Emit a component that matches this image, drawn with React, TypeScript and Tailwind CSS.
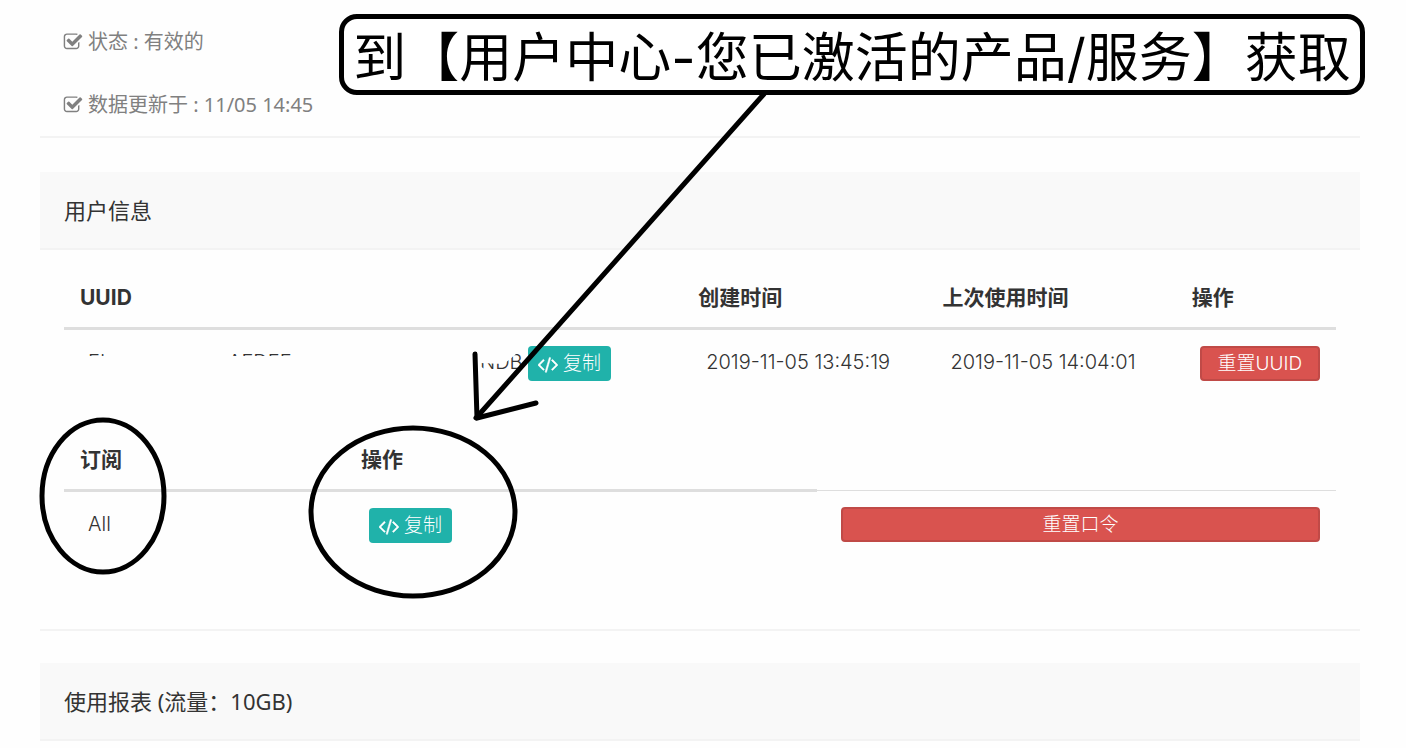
import type { ReactNode } from 'react';

function CheckIcon() {
  return (
    <svg viewBox="0 0 1792 1792" className="size-5 shrink-0 fill-current" aria-hidden="true">
      <path d="M1472 930v318q0 119-84.5 203.5t-203.5 84.5h-832q-119 0-203.5-84.5t-84.5-203.5v-832q0-119 84.5-203.5t203.5-84.5h832q63 0 117 25 15 7 18 23 3 17-9 29l-49 49q-10 10-23 10-3 0-9-2-23-6-45-6h-832q-66 0-113 47t-47 113v832q0 66 47 113t113 47h832q66 0 113-47t47-113v-254q0-13 9-22l64-64q10-10 23-10 6 0 12 3 20 8 20 29zm231-489l-814 814q-24 24-57 24t-57-24l-430-430q-24-24-24-57t24-57l110-110q24-24 57-24t57 24l263 263 647-647q24-24 57-24t57 24l110 110q24 24 24 57t-24 57z" />
    </svg>
  );
}

function CodeIcon() {
  return (
    <svg
      viewBox="-10 -40 1832 1832"
      className="size-5 shrink-0 fill-current stroke-current stroke-[50]"
      aria-hidden="true"
    >
      <path d="M553 1399l-50 50q-10 10-23 10t-23-10l-466-466q-10-10-10-23t10-23l466-466q10-10 23-10t23 10l50 50q10 10 10 23t-10 23l-393 393 393 393q10 10 10 23t-10 23zm591-1067l-373 1291q-4 13-15.5 19.5t-23.5 2.5l-62-17q-13-4-19.5-15.5t-2.5-24.5l373-1291q4-13 15.5-19.5t23.5-2.5l62 17q13 4 19.5 15.5t2.5 24.5zm657 651l-466 466q-10 10-23 10t-23-10l-50-50q-10-10-10-23t10-23l393-393-393-393q-10-10-10-23t10-23l50-50q10-10 23-10t23 10l466 466q10 10 10 23t-10 23z" />
    </svg>
  );
}

function CopyButton() {
  return (
    <button
      type="button"
      className="flex h-[35px] items-center gap-[5px] rounded bg-[#20b2aa] px-2.5 text-[19px] leading-6 font-light whitespace-nowrap text-white"
    >
      <CodeIcon />
      复制
    </button>
  );
}

function ResetButton({ children }: { children: ReactNode }) {
  return (
    <button
      type="button"
      className="flex h-[35px] w-full items-center justify-center rounded border-2 border-[#c04a47] bg-[#d9534f] text-[19px] leading-6 font-light whitespace-nowrap text-white"
    >
      {children}
    </button>
  );
}

function PanelHeader({ children }: { children: ReactNode }) {
  return (
    <h2 className="border-b-2 border-[#f3f3f3] bg-[#f9f9f9] px-6 py-[22px] font-['Noto_Sans','Noto_Sans_CJK_SC',sans-serif] text-[22px] leading-8 font-normal">
      {children}
    </h2>
  );
}

const thClass = 'border-b-3 border-[#dedede] px-4 pt-2 pb-[17px] text-left text-[21px] leading-6 font-bold';
const tdClass = 'border-t border-[#dedede] pt-4 pr-4 pb-4 pl-6 align-top text-[20px] leading-8 font-light';

// Drawn over the page to point readers at the copy button
function Annotations() {
  return (
    <>
      <svg className="pointer-events-none absolute inset-0 h-full w-full" aria-hidden="true">
        <g fill="none" stroke="#000" strokeWidth="5" strokeLinecap="round" strokeLinejoin="round">
          <ellipse cx="103" cy="496" rx="61" ry="76" />
          <ellipse cx="413" cy="512" rx="102" ry="84" />
          <path d="M764 94 L476 418" />
          <path d="M475 354 L477 418 L536 403" />
        </g>
      </svg>
      <p className="absolute top-[14px] left-[339px] flex h-[81px] w-[1026px] items-center justify-center rounded-[18px] border-5 border-black bg-white pt-2 text-[53px] leading-none whitespace-nowrap text-black">
        到【用户中心-您已激活的产品/服务】获取
      </p>
    </>
  );
}

export default function App() {
  return (
    <div className="relative min-h-screen overflow-hidden bg-[#fefefe] pr-[46px] pl-10 font-['Inter','Noto_Sans_CJK_SC',sans-serif] text-[#333]">
      <section className="flex flex-col gap-[35px] border-b-2 border-[#f3f3f3] px-[23px] pt-7 pb-[17px] font-['Noto_Sans','Noto_Sans_CJK_SC',sans-serif] text-[20px] leading-7 font-normal text-[#808080]">
        <p className="flex items-center gap-[5px]">
          <CheckIcon />
          状态 : 有效的
        </p>
        <p className="flex items-center gap-[5px]">
          <CheckIcon />
          数据更新于 : 11/05 14:45
        </p>
      </section>

      <section className="mt-[34px] border-b-2 border-[#f3f3f3]">
        <PanelHeader>用户信息</PanelHeader>
        <div className="flex flex-col gap-[43px] px-6 pt-7 pb-[70px]">
          <table className="w-full table-fixed">
            <thead>
              <tr>
                <th className={`${thClass} w-[48.6%]`}>UUID</th>
                <th className={`${thClass} w-[19.2%]`}>创建时间</th>
                <th className={`${thClass} w-[19.6%]`}>上次使用时间</th>
                <th className={thClass}>操作</th>
              </tr>
            </thead>
            <tbody>
              <tr>
                <td className={tdClass}>
                  {/* UUID is masked, only slivers of it show */}
                  <div className="flex items-start">
                    <span className="w-[140px] [clip-path:inset(0_0_22px_0)]">EL</span>
                    <span className="w-[252px] [clip-path:inset(0_0_22px_0)]">AEDEF</span>
                    <span className="w-[48px] [clip-path:polygon(0_17px,24px_18px,36px_8px,48px_8px,48px_100%,18px_100%,0_20px)]">
                      NDB
                    </span>
                    <CopyButton />
                  </div>
                </td>
                <td className={tdClass}>2019-11-05 13:45:19</td>
                <td className={tdClass}>2019-11-05 14:04:01</td>
                <td className={tdClass}>
                  <ResetButton>重置UUID</ResetButton>
                </td>
              </tr>
            </tbody>
          </table>

          <table className="w-full table-fixed">
            <thead>
              <tr>
                <th className={`${thClass} w-[22.1%]`}>订阅</th>
                <th className={`${thClass} w-[37.1%]`}>操作</th>
                <td />
              </tr>
            </thead>
            <tbody>
              <tr>
                <td className={tdClass}>All</td>
                <td className={tdClass}>
                  <CopyButton />
                </td>
                <td className={tdClass}>
                  <ResetButton>重置口令</ResetButton>
                </td>
              </tr>
            </tbody>
          </table>
        </div>
      </section>

      <section className="mt-8">
        <PanelHeader>使用报表 (流量：10GB)</PanelHeader>
      </section>

      <Annotations />
    </div>
  );
}
